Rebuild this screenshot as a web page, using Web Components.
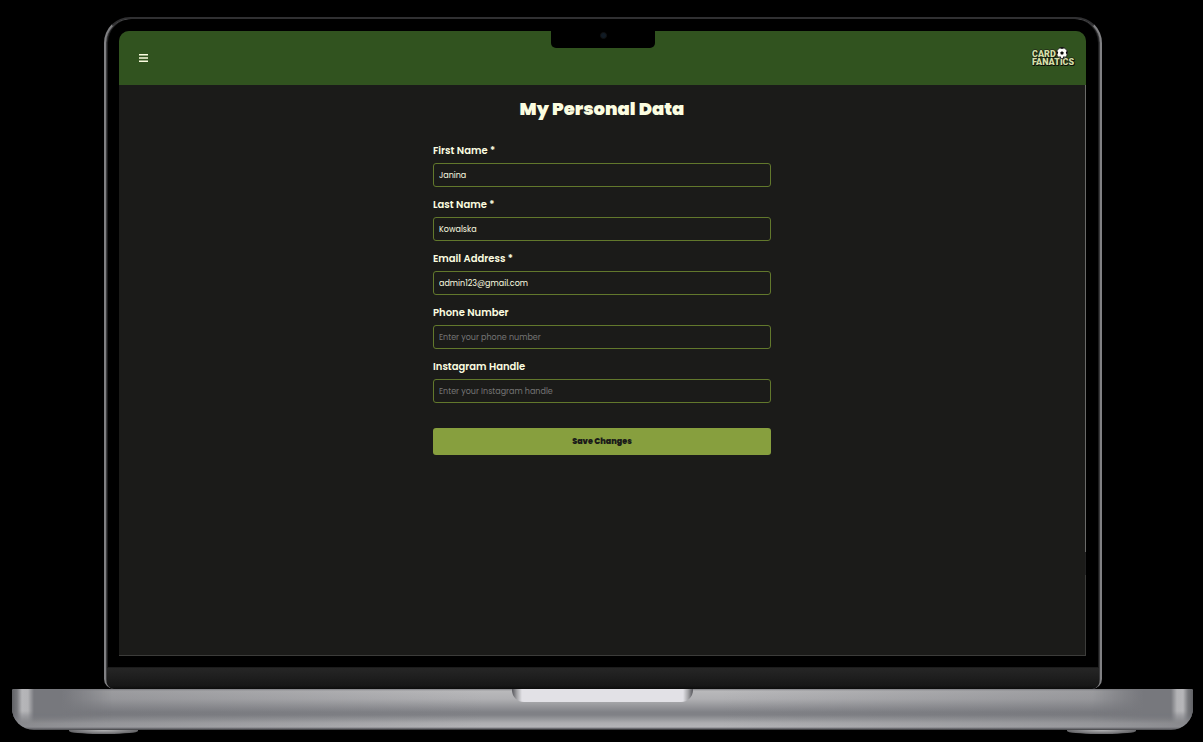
<!DOCTYPE html>
<html lang="en">
<head>
<meta charset="utf-8">
<title>My Personal Data</title>
<style>
html{background:#000}
body{margin:0;background:#000;color:#fbfde0;font-family:Poppins,Inter,sans-serif}
</style>
</head>
<body>
<laptop-frame>
  <app-header slot="screen"></app-header>
  <profile-form slot="screen"></profile-form>
</laptop-frame>
<script>
const define = (name, html, setup) => customElements.define(name, class extends HTMLElement {
  connectedCallback() {
    if (this.shadowRoot) return;
    const t = document.createElement('template');
    t.innerHTML = html;
    this.attachShadow({mode: 'open'}).append(t.content.cloneNode(true));
    if (setup) setup(this, this.shadowRoot);
  }
});

define('laptop-frame', `
<style>
*{box-sizing:border-box}
:host{display:flex;flex-direction:column;min-height:100vh;box-sizing:border-box;padding:17px 10px 8px 12px}
.lid{flex:1;display:flex;flex-direction:column;margin:0 91px 0 92px;border:solid #808083;border-width:2px 2px 0;border-top-color:#303032;border-radius:26px 26px 10px 10px;background:#000;overflow:hidden;position:relative;box-shadow:inset 1px 0 #3c3c3e,inset -1px 0 #3c3c3e,inset 2px 0 #1c1c1d,inset -2px 0 #1c1c1d}
.corner{position:absolute;top:-2px;width:26px;height:26px;fill:none;stroke:#a0a0a2;stroke-width:2}
.left{left:-2px}.right{right:-2px;transform:scaleX(-1)}
.screen{flex:1;display:flex;flex-direction:column;margin:12px 14px 11px 13px;background:#1b1b19;border-radius:10px 10px 0 0;border-bottom:1px solid #3c3c3a;position:relative;overflow:hidden}
.edge{position:absolute;right:0;top:54px;bottom:0;width:1px;background:linear-gradient(#6a6a68 0 82%,#222 82% 86%,#3c3c3a 86%)}
.notch{position:absolute;top:0;left:50%;width:104px;height:17px;margin-left:-52px;background:#000;border-radius:0 0 5px 5px}
.notch::after{content:"";position:absolute;left:49px;top:1px;width:5px;height:5px;border-radius:50%;background:#101a24;border:1px solid #111}
.chin{height:22px;margin:0 1px;background:linear-gradient(#262626,#171717 85%,#0c0c0c);border-top:1px solid #1c1c1c}
.base{height:41px;position:relative;display:flex;justify-content:center;border-radius:2px 2px 22px 22px;overflow:hidden;background:
 linear-gradient(#858589 0,#b9b9bb 2px,#b0b0b3 10px,#808186 23px,#808186 26px,#adadb0 34px,#b4b4b7 38px,#55555a 40px,#222)}
.base::before{content:"";position:absolute;inset:0;background:linear-gradient(90deg,#6e6f7499,#6e6f7466 8%,#6e6f7433 25%,transparent 40%,transparent 60%,#6e6f7433 75%,#6e6f7466 92%,#6e6f7499)}
.base::after{content:"";position:absolute;inset:0;background:linear-gradient(90deg,#606165 0,#77787c 5px,#b6b6b9 10px,#b3b3b6 16px,#77787d 22px,#77787d 50px,transparent 100px,transparent calc(100% - 100px),#77787d calc(100% - 50px),#77787d calc(100% - 22px),#b3b3b6 calc(100% - 16px),#b6b6b9 calc(100% - 10px),#77787c calc(100% - 5px),#606165);-webkit-mask:linear-gradient(#000 22px,transparent 34px);mask:linear-gradient(#000 22px,transparent 34px)}
.lip{width:181px;height:13px;margin-left:-1px;border-radius:0 0 12px 12px;position:relative;z-index:1;background:linear-gradient(90deg,#55555a,#a5a5a8 5px,#e2e1e6 10px,#e2e1e6 calc(100% - 10px),#a5a5a8 calc(100% - 5px),#55555a)}
.feet{display:flex;justify-content:space-between;padding:0 57px}
.feet i{width:69px;height:4px;background:radial-gradient(ellipse at 50% 0,#b5b5b7,#68686b 70%,#333);border-radius:0 0 30px 30px / 0 0 3px 3px}
</style>
<div class="lid">
  <svg class="corner left" viewBox="0 0 26 26"><path d="M1 26A25 25 0 0 1 24 1"/></svg>
  <svg class="corner right" viewBox="0 0 26 26"><path d="M1 26A25 25 0 0 1 24 1"/></svg>
  <div class="screen"><slot name="screen"></slot><div class="edge"></div><div class="notch"></div></div>
  <div class="chin"></div>
</div>
<div class="base"><div class="lip"></div></div>
<div class="feet"><i></i><i></i></div>`);

define('app-header', `
<style>
:host{display:flex;align-items:center;justify-content:space-between;height:54px;padding:0 10px 0 20px;background:#31531f}
button{appearance:none;border:0;padding:0;background:none;color:#fbfde0;display:flex;cursor:pointer}
svg{display:block}
</style>
<button type="button" aria-label="Menu"><svg width="9" height="10" viewBox="0 0 9 10" stroke="currentColor" stroke-width="1.6"><path d="M0 1.8h9M0 5h9M0 8.2h9"/></svg></button>
<card-logo></card-logo>`);

define('card-logo', `
<style>
:host{display:block;color:#d5dea8}
a{display:block;position:relative;width:44px;padding-top:2px;margin-bottom:2px;color:inherit;text-decoration:none;font:900 9px/8px Roboto,sans-serif;text-shadow:1px 0 #151c0e,-1px 0 #26351a,0 1px #0c1208,0 -1px #26351a,1px 1px #0c1208}
span{display:block;white-space:nowrap}
svg{position:absolute;left:24px;top:-1px}
</style>
<a href="#"><span>CARD</span><span>FANATICS</span>
<svg width="12" height="12" viewBox="0 0 12 12"><circle cx="6" cy="6" r="5.5" fill="#fcfcf8" stroke="#111" stroke-width=".8"/><path fill="#090909" d="M6 4.2 7.8 5.5 7.1 7.5H4.9L4.2 5.5zM3.6.9 6 1.9 8.4.9Q6-.2 3.6.9zM.7 4l1.5.9L1.5 7.8Q.2 6 .7 4zM11.3 4l-1.5.9.7 2.9Q11.8 6 11.3 4zM3 9.4l1.8.2.2 1.6Q3.6 11 3 9.4zM9 9.4l-1.8.2-.2 1.6Q8.4 11 9 9.4z"/></svg></a>`);

define('form-field', `
<style>
:host{display:flex;flex-direction:column;gap:3px}
label{font-size:10px;font-weight:600;line-height:18px}
input{box-sizing:border-box;width:100%;height:24px;margin:0;padding:1px 5px 0;border:1px solid #62782c;border-radius:3px;background:transparent;color:#fbfde0;font:400 8px/14px Poppins,Inter,sans-serif;outline:0}
input::placeholder{color:#757575;opacity:1}
</style>
<label for="field"></label><input id="field">`, (host, root) => {
  const input = root.querySelector('input');
  root.querySelector('label').textContent = host.getAttribute('label');
  input.type = host.getAttribute('type') || 'text';
  input.value = host.getAttribute('value') || '';
  input.placeholder = host.getAttribute('placeholder') || '';
});

define('profile-form', `
<style>
:host{display:block;padding:10px 17px 10px 16px}
h1{margin:0 0 19px;text-align:center;font-size:18px;font-weight:900;line-height:28px}
form{display:flex;flex-direction:column;gap:9px;width:100%;max-width:338px;margin:0 auto}
button{height:27px;margin-top:16px;padding:0;border:0;border-radius:3px;background:#879f3e;color:#1b1b19;font:900 8px/14px Poppins,Inter,sans-serif;cursor:pointer}
</style>
<h1>My Personal Data</h1>
<form>
<form-field label="First Name *" value="Janina"></form-field>
<form-field label="Last Name *" value="Kowalska"></form-field>
<form-field label="Email Address *" type="email" value="admin123@gmail.com"></form-field>
<form-field label="Phone Number" type="tel" placeholder="Enter your phone number"></form-field>
<form-field label="Instagram Handle" placeholder="Enter your Instagram handle"></form-field>
<button type="button">Save Changes</button>
</form>`);
</script>
</body>
</html>
